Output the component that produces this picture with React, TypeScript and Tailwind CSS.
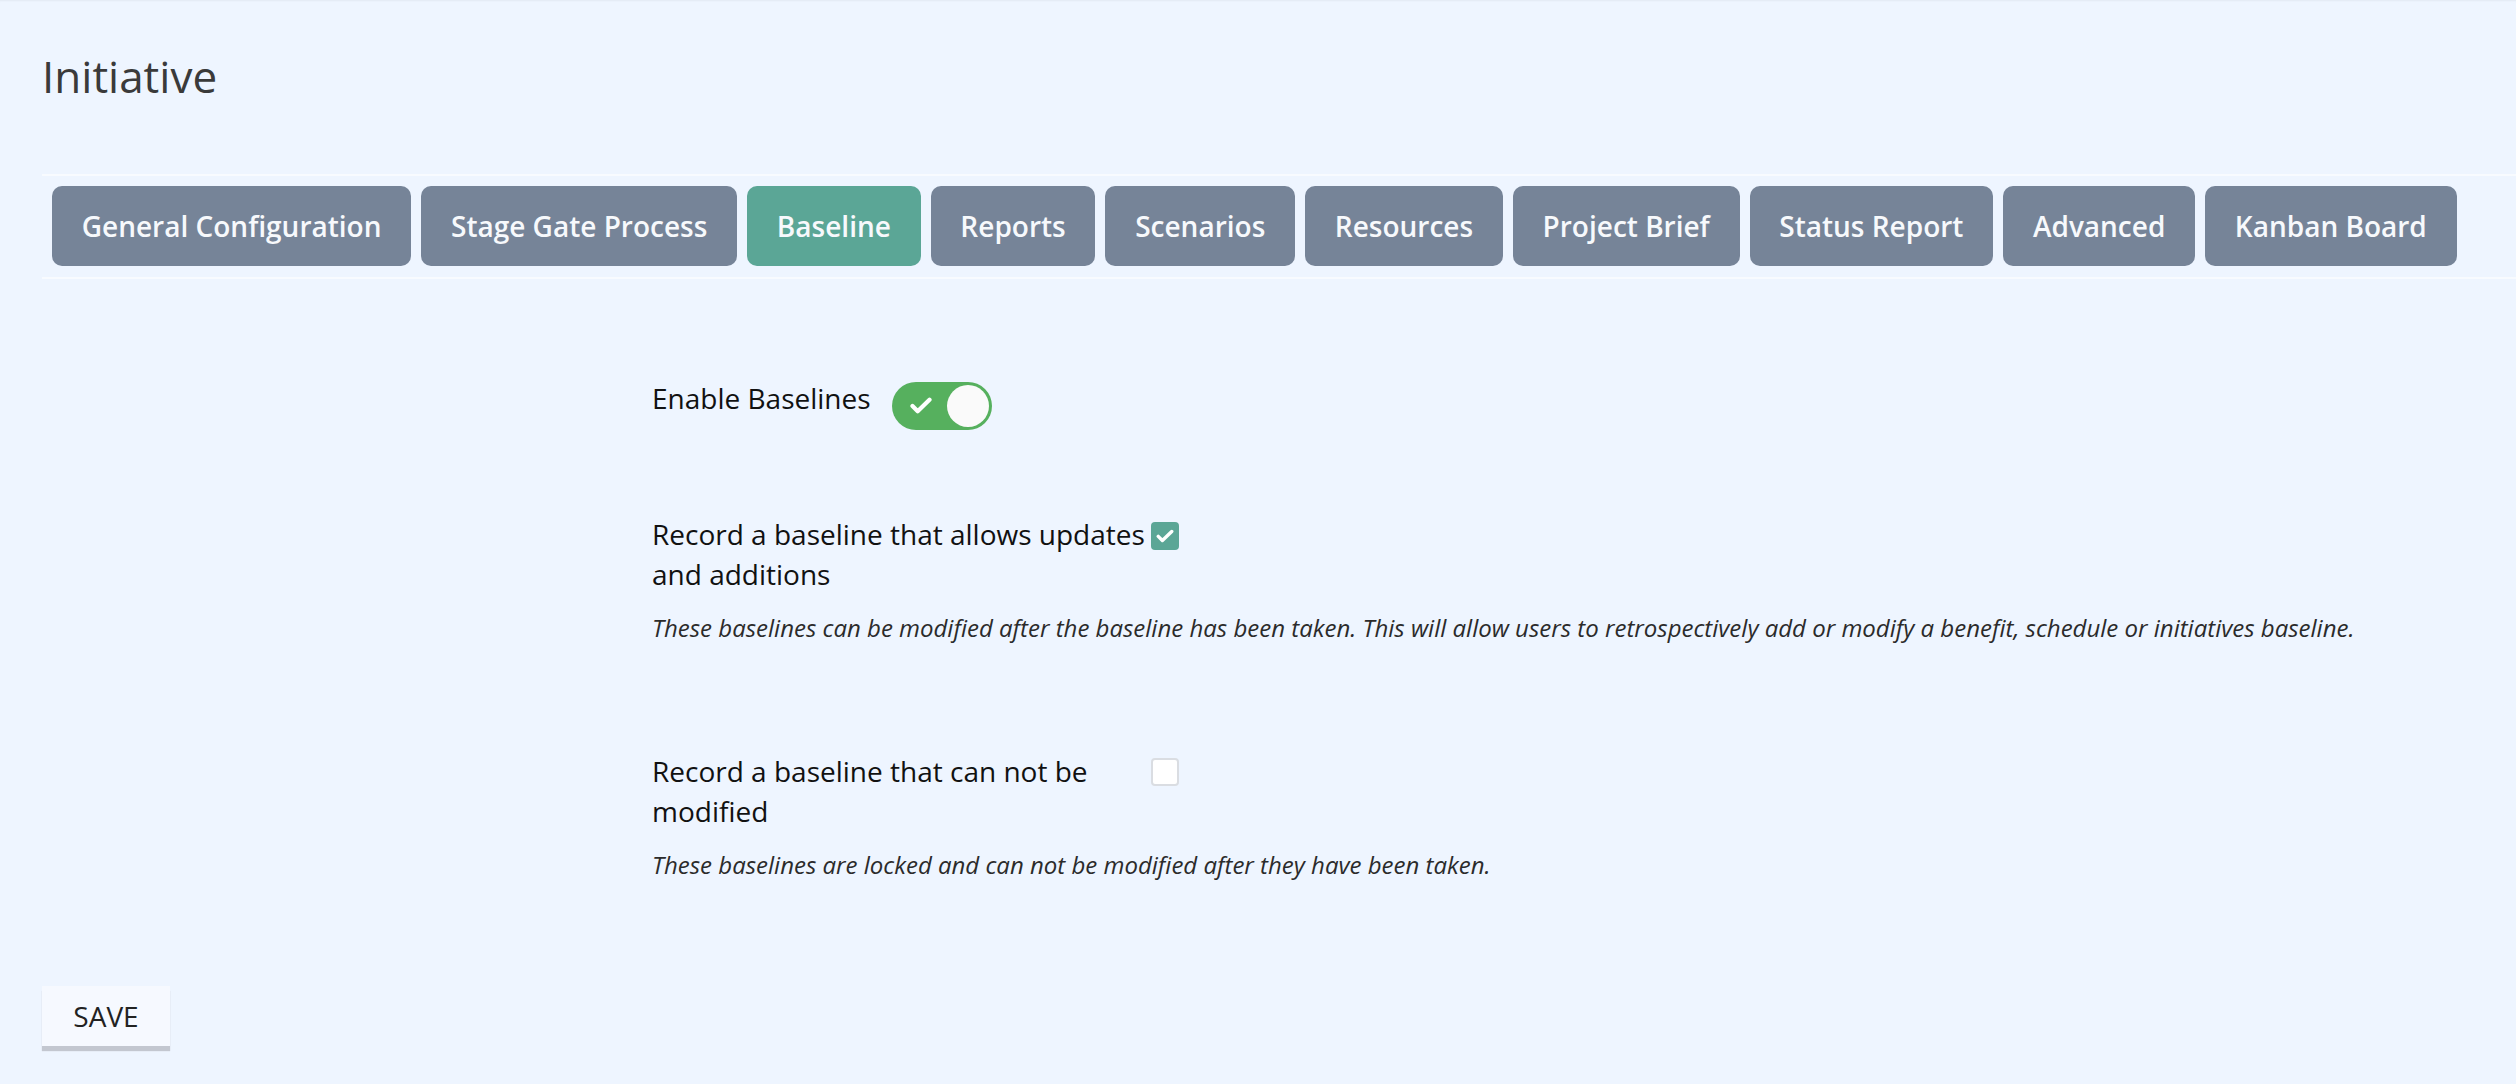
import React from "react";

const tabs = [
  "General Configuration",
  "Stage Gate Process",
  "Baseline",
  "Reports",
  "Scenarios",
  "Resources",
  "Project Brief",
  "Status Report",
  "Advanced",
  "Kanban Board",
];

const Check = ({ className }: { className?: string }) => (
  <svg viewBox="0 0 24 18" className={className} fill="none">
    <path d="M3 9.5l5.5 5.5L21 3" stroke="white" strokeWidth="4.5" strokeLinecap="round" strokeLinejoin="round" />
  </svg>
);

const Toggle = () => (
  <div className="relative mt-[4px] ml-[21px] h-[48px] w-[100px] shrink-0 rounded-full bg-[#56b05e]">
    <Check className="absolute left-[17px] top-[15px] h-[17px] w-[24px]" />
    <div className="absolute right-[3px] top-[3px] h-[42px] w-[42px] rounded-full bg-[#fafafa]" />
  </div>
);

interface OptionProps {
  label: string;
  note: string;
  checked: boolean;
}

const Option: React.FC<OptionProps> = ({ label, note, checked }) => (
  <div>
    <div className="flex items-start">
      <div className="w-[499px] text-[28px] leading-[40px] text-[#111]">{label}</div>
      {checked ? (
        <div className="mt-[8px] flex h-[28px] w-[28px] items-center justify-center rounded-[4px] bg-[#5ba696]">
          <Check className="h-[14px] w-[18px]" />
        </div>
      ) : (
        <div className="mt-[7px] h-[28px] w-[28px] rounded-[4px] border-2 border-[#dadde2] bg-white" />
      )}
    </div>
    <p className="mt-[17px] text-[24px] italic leading-[34px] text-[#2b2b2b]">{note}</p>
  </div>
);

export default function App() {
  return (
    <div className="min-h-screen bg-[#eef5ff] pl-[42px] font-['Open_Sans',sans-serif] shadow-[inset_0_2px_2px_-1px_rgba(0,0,0,0.05)]">
      <h1 className="pt-[51px] text-[44px] font-normal leading-[50px] text-[#3a3a3a]">Initiative</h1>

      {/* Tabs */}
      <div className="mt-[73px] flex gap-[10px] border-y-2 border-[#f8fbff] pb-[11px] pl-[10px] pt-[10px]">
        {tabs.map((tab) => (
          <div
            key={tab}
            className={`flex h-[80px] items-center whitespace-nowrap rounded-[10px] px-[29.75px] text-[28px] font-semibold text-[#f7f9fc] ${
              tab === "Baseline" ? "bg-[#5ba696]" : "bg-[#768498]"
            }`}
          >
            {tab}
          </div>
        ))}
      </div>

      <div className="ml-[610px]">
        <div className="mt-[99px] flex items-start">
          <div className="text-[28px] leading-[40px] text-[#111]">Enable Baselines</div>
          <Toggle />
        </div>

        <div className="mt-[84px]">
          <Option
            label="Record a baseline that allows updates and additions"
            note="These baselines can be modified after the baseline has been taken. This will allow users to retrospectively add or modify a benefit, schedule or initiatives baseline."
            checked
          />
        </div>

        <div className="mt-[106px]">
          <Option
            label="Record a baseline that can not be modified"
            note="These baselines are locked and can not be modified after they have been taken."
            checked={false}
          />
        </div>
      </div>

      <button className="mt-[104px] h-[60px] w-[128px] bg-[#f6f9ff] text-[28px] text-[#222] shadow-[0_5px_1px_0_#c3c7d0]">
        SAVE
      </button>
    </div>
  );
}
